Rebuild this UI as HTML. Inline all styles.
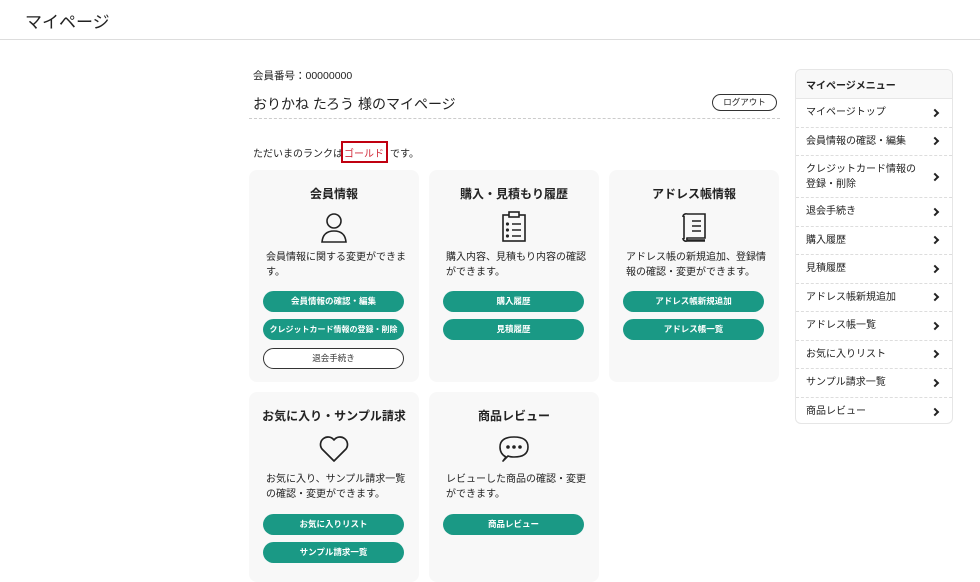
<!DOCTYPE html>
<html><head><meta charset="utf-8"><style>
*{margin:0;padding:0;box-sizing:border-box}
body{width:980px;height:567px;overflow:hidden;background:#fff;font-family:"Liberation Sans","Noto Sans CJK JP",sans-serif;color:#222;position:relative}
.a{position:absolute;white-space:nowrap}
.card{position:absolute;background:#f8f8f8;border-radius:8px;width:170px}
.card .t{position:absolute;left:0;right:0;text-align:center;font-size:12px;font-weight:bold;top:15px}
.card svg{position:absolute;left:70px;top:40px}
.card .d{position:absolute;left:17px;right:12px;top:80px;font-size:10px;line-height:15px;white-space:normal}
.btn{position:absolute;left:14px;width:141px;height:21px;border-radius:11px;background:#1a9985;color:#fff;font-size:8.5px;font-weight:bold;text-align:center;line-height:21px;white-space:nowrap}
.btn.w{background:#fff;color:#333;border:1px solid #333;line-height:19px;font-weight:normal}
.side{position:absolute;left:795px;top:69px;width:158px;height:355px;border:1px solid #e6e6e6;border-radius:6px;background:#fff}
.side .h{height:29px;background:#f8f8f8;border-bottom:1px solid #e6e6e6;font-size:10px;font-weight:bold;padding:7px 0 0 10px;border-radius:6px 6px 0 0}
.side .i{position:relative;border-bottom:1px dashed #ddd;font-size:10px;padding:0 30px 0 10px;display:flex;align-items:center;height:28.5px;line-height:15px}
.side .i:last-child{border-bottom:none}
.side .i:after{content:"";position:absolute right;position:absolute;right:14px;top:50%;width:4px;height:4px;border-right:2px solid #222;border-top:2px solid #222;transform:translateY(-50%) rotate(45deg)}
</style></head><body>
<div class="a" style="left:25px;top:8px;font-size:17px">マイページ</div>
<div class="a" style="left:0;top:39px;width:980px;border-top:1px solid #ddd"></div>

<div class="a" style="left:253px;top:68px;font-size:10.5px">会員番号：00000000</div>
<div class="a" style="left:253px;top:94px;font-size:14px">おりかね たろう 様のマイページ</div>
<div class="a" style="left:712px;top:94px;width:65px;height:17px;border:1px solid #333;border-radius:9px;font-size:8.5px;text-align:center;line-height:15px">ログアウト</div>
<div class="a" style="left:249px;top:118px;width:531px;border-top:1px dashed #ccc"></div>
<div class="a" style="left:253px;top:145px;font-size:10px">ただいまのランクは</div>
<div class="a" style="left:344px;top:145px;font-size:10px;color:#d12a3a">ゴールド</div>
<div class="a" style="left:390px;top:145px;font-size:10px">です。</div>
<div class="a" style="left:341px;top:141px;width:47px;height:22px;border:2px solid #c00010"></div>

<div class="card" style="left:249px;top:170px;height:212px">
<div class="t">会員情報</div>
<svg width="30" height="32" viewBox="0 0 30 32" style="left:70px;top:42px" fill="none" stroke="#222" stroke-width="1.6"><circle cx="15" cy="9" r="7"/><path d="M3 30 Q4 19 15 19 Q26 19 27 30 Z"/></svg>
<div class="d">会員情報に関する変更ができます。</div>
<div class="btn" style="top:121px">会員情報の確認・編集</div>
<div class="btn" style="top:149px;font-size:8px">クレジットカード情報の登録・削除</div>
<div class="btn w" style="top:178px">退会手続き</div>
</div>

<div class="card" style="left:429px;top:170px;height:212px">
<div class="t">購入・見積もり履歴</div>
<svg width="30" height="32" viewBox="0 0 30 32" style="left:70px;top:41px" fill="none" stroke="#222" stroke-width="1.6"><rect x="4" y="4" width="22" height="26"/><rect x="10" y="1" width="10" height="5" fill="#f8f8f8"/><path d="M13 13h9M13 19h9M13 25h9"/><circle cx="8.5" cy="13" r=".8" fill="#222"/><circle cx="8.5" cy="19" r=".8" fill="#222"/><circle cx="8.5" cy="25" r=".8" fill="#222"/></svg>
<div class="d">購入内容、見積もり内容の確認ができます。</div>
<div class="btn" style="top:121px">購入履歴</div>
<div class="btn" style="top:149px">見積履歴</div>
</div>

<div class="card" style="left:609px;top:170px;height:212px">
<div class="t">アドレス帳情報</div>
<svg width="30" height="32" viewBox="0 0 30 32" style="left:70px;top:41px" fill="none" stroke="#222" stroke-width="1.6"><path d="M8 3h18v24H8a4 4 0 0 0 0 2h18"/><path d="M5 5v23"/><path d="M4 6a3 3 0 0 1 4-3M4 27a3 3 0 0 0 4 3h18"/><path d="M13 10h9M13 15h9M13 20h9"/></svg>
<div class="d">アドレス帳の新規追加、登録情報の確認・変更ができます。</div>
<div class="btn" style="top:121px">アドレス帳新規追加</div>
<div class="btn" style="top:149px">アドレス帳一覧</div>
</div>

<div class="card" style="left:249px;top:392px;height:190px">
<div class="t">お気に入り・サンプル請求</div>
<svg width="32" height="30" viewBox="0 0 32 30" style="left:69px;top:42px" fill="none" stroke="#222" stroke-width="1.7"><path d="M16 27 L4 15 A7 7 0 0 1 16 6 A7 7 0 0 1 28 15 Z" stroke-linejoin="round"/></svg>
<div class="d">お気に入り、サンプル請求一覧の確認・変更ができます。</div>
<div class="btn" style="top:122px">お気に入りリスト</div>
<div class="btn" style="top:150px">サンプル請求一覧</div>
</div>

<div class="card" style="left:429px;top:392px;height:190px">
<div class="t">商品レビュー</div>
<svg width="32" height="30" viewBox="0 0 32 30" style="left:69px;top:42px" fill="none" stroke="#222" stroke-width="1.6"><path d="M8 23 Q2 20 2 13 Q2 3 16 3 Q30 3 30 13 Q30 23 16 23 Q12 23 10 22 L5 27 Z" stroke-linejoin="round"/><circle cx="10" cy="13" r="1" fill="#222"/><circle cx="16" cy="13" r="1" fill="#222"/><circle cx="22" cy="13" r="1" fill="#222"/></svg>
<div class="d">レビューした商品の確認・変更ができます。</div>
<div class="btn" style="top:122px">商品レビュー</div>
</div>

<div class="side">
<div class="h">マイページメニュー</div>
<div class="i">マイページトップ</div>
<div class="i">会員情報の確認・編集</div>
<div class="i" style="height:42px">クレジットカード情報の登録・削除</div>
<div class="i">退会手続き</div>
<div class="i">購入履歴</div>
<div class="i">見積履歴</div>
<div class="i">アドレス帳新規追加</div>
<div class="i">アドレス帳一覧</div>
<div class="i">お気に入りリスト</div>
<div class="i">サンプル請求一覧</div>
<div class="i">商品レビュー</div>
</div>
</body></html>
